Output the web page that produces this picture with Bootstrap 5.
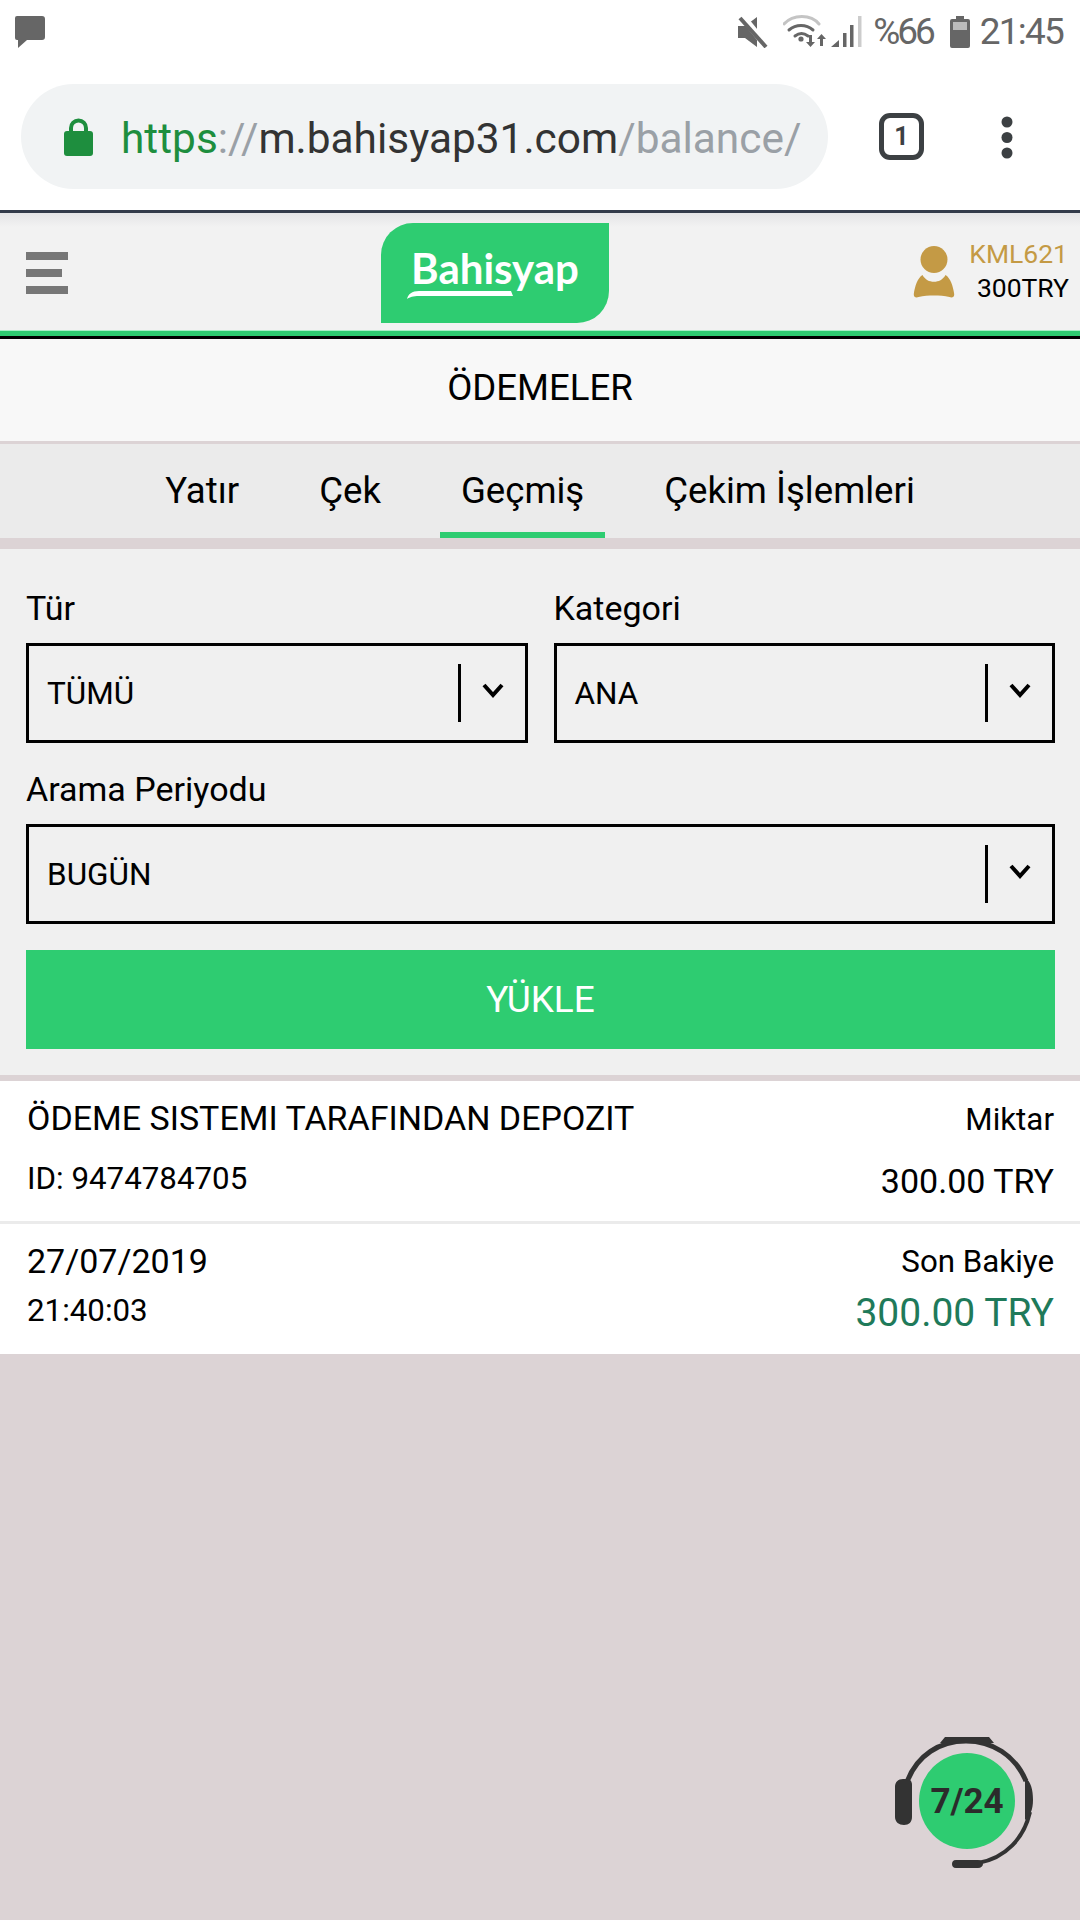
<!DOCTYPE html>
<html lang="tr">

<head>
  <meta charset="UTF-8" />
  <meta name="viewport" content="width=device-width, initial-scale=1.0" />
  <title>Bahisyap - Ödemeler</title>
  <link href="https://cdn.jsdelivr.net/npm/bootstrap@5.3.3/dist/css/bootstrap.min.css" rel="stylesheet" />
  <style>
    body {
      position: relative;
      min-height: 1920px;
      background: #dcd3d5;
      font-family: Roboto, sans-serif;
      color: #000;
      overflow: hidden;
    }

    /* phone + browser chrome */
    .phone-status {
      height: 84px;
      padding: 15px 17px 0 14px;
      background: #fff;
      color: #666;
    }

    .status-text {
      gap: 14px;
      font-size: 37px;
      line-height: 33px;
    }

    .status-icons { gap: 15px; margin-right: -3px; }
    .status-pct { letter-spacing: -3px; margin-right: 3px; }
    .status-batt { margin-right: -4px; }
    .status-time { letter-spacing: -1.8px; }

    .omni-row {
      height: 126px;
      background: #fff;
    }

    .omni-pill {
      width: 807px;
      height: 105px;
      margin-left: 21px;
      padding-left: 43px;
      background: #f1f3f4;
      border-radius: 53px;
      font-size: 42.4px;
      white-space: nowrap;
    }

    .lock-ico { margin-right: 28px; flex-shrink: 0; }
    .url-text { padding-top: 4px; }
    .url-https { color: #1e8e3e; }
    .url-sep { color: #9aa0a6; }
    .url-host { color: #333; }

    .tab-count {
      width: 45px;
      height: 47px;
      margin: 29px 0 0 51px;
      border: 5px solid #3c4043;
      border-radius: 11px;
      font-size: 25px;
      font-weight: 700;
      line-height: 1;
      color: #3c4043;
    }

    .omni-dots { margin: 32px 0 0 77px; }

    /* site header */
    .site-head {
      height: 129px;
      padding: 0 11px 0 26px;
      background: linear-gradient(#e4e4e6, #f2f2f2 14px);
      border-top: 3px solid #333b4a;
      border-bottom: 3px solid #000;
      box-shadow: inset 0 -5px 0 #2ecc71, inset 0 -6px 0 #a8f0c8;
      flex-wrap: nowrap;
      align-items: flex-start;
    }

    .burger { width: 42px; margin-top: 39px; }

    .burger i {
      display: block;
      height: 8px;
      margin-bottom: 9px;
      background: #777;
    }

    .burger i:nth-child(2) { width: 36px; }

    .logo-mark {
      width: 228px;
      height: 100px;
      margin: 10px 0 0 313px;
      padding-bottom: 10px;
      background: #2ecc71;
      border-radius: 32px 0 32px 0;
      color: #fff;
      font-family: Lato, sans-serif;
      font-size: 42px;
      font-weight: 700;
      line-height: 1;
    }

    .logo-swoosh { position: absolute; left: 26px; top: 67px; }

    .user-box { font-size: 26.5px; line-height: 34px; margin-top: 24px; }
    .user-ico { margin-top: 9px; }
    .user-info { margin-left: 14px; }
    .user-name { color: #c49a45; margin-right: 1px; }

    /* page */
    .page-title {
      height: 105px;
      padding-bottom: 4px;
      background: #f8f8f8;
      border-bottom: 3px solid #dcd3d5;
      font-size: 36.6px;
    }

    .pay-tabs {
      height: 105px;
      background: #ebebeb;
      border-bottom: 11px solid #dcd3d5;
      gap: 38px;
    }

    .pay-tabs .nav-link {
      height: 94px;
      padding: 0 21px;
      color: #000;
      font-size: 36.6px;
      line-height: 94px;
    }

    .pay-tabs .nav-link.active { border-bottom: 6px solid #2ecc71; }

    .filter-box {
      height: 532px;
      padding: 35px 25px 0 26px;
      background: #f0f0f0;
      border-bottom: 6px solid #dcd3d5;
    }

    .filter-row { --bs-gutter-x: 26px; }

    .filter-label {
      margin: 0 0 10px;
      font-size: 34px;
      line-height: 49px;
    }

    .pick-box {
      height: 100px;
      padding: 2px 0 0 18px;
      margin-bottom: 22px;
      border: 3px solid #000;
      font-size: 31.5px;
    }

    .pick-arrow {
      width: 67px;
      height: 58px;
      margin: -2px 0 0 auto;
      border-left: 3px solid #000;
    }

    .pick-arrow svg { margin-bottom: 4px; }

    .load-btn {
      display: block;
      width: 100%;
      height: 99px;
      margin-top: 26px;
      border: 0;
      border-radius: 0;
      background: #2ecc71;
      color: #fff;
      font-size: 37px;
    }

    .tx-row {
      padding: 17px 26px 0 27px;
      background: #fff;
      white-space: nowrap;
      line-height: 40px;
    }

    .tx-top { height: 143px; border-bottom: 3px solid #ebebeb; }
    .tx-bottom { height: 130px; }

    .tx-big { font-size: 34px; }
    .tx-mid { font-size: 31.3px; }
    .tx-saldo { font-size: 39px; color: #1f7a5a; }

    .gap-id { margin-top: 21px; }
    .gap-amount { margin-top: 21px; }
    .gap-time { margin-top: 10px; }
    .gap-saldo { margin-top: 11px; }
    .nudge-two { margin-top: 2px; }
    .nudge-one { margin-top: 1px; }

    /* support widget sits over the page */
    .help-widget { position: absolute; left: 890px; top: 1730px; }
  </style>
</head>

<body>
  <div class="phone-status d-flex justify-content-between align-items-start">
    <svg width="32" height="34" viewBox="0 0 32 34"><path fill="#666" d="M3 1h25a3 3 0 0 1 3 3v18a3 3 0 0 1-3 3H13l-9 8v-8H3a2 2 0 0 1-2-2V3a2 2 0 0 1 2-2z"/></svg>
    <div class="d-flex align-items-center status-text">
      <div class="d-flex align-items-center status-icons">
        <svg width="30" height="32" viewBox="0 0 30 32">
          <path fill="#666" d="M0 10h7L19 1v30L7 22H0z"/>
          <path fill="none" stroke="#fff" stroke-width="7" d="M4 0l26 32"/>
          <path fill="none" stroke="#666" stroke-width="4" d="M2 2l26 29"/>
        </svg>
        <svg width="79" height="33" viewBox="0 0 79 33">
          <g fill="none" stroke-linecap="round" stroke-width="3">
            <path stroke="#c4c4c4" d="M1 9C10-1 28-1 36 9"/>
            <path stroke="#666" d="M6 15c7-6 17-6 24 0"/>
            <path stroke="#666" d="M12 21c4-3 9-3 13 0"/>
          </g>
          <circle cx="18" cy="24" r="2.6" fill="#666"/>
          <path fill="#666" d="M26 20h3v7h3l-4.500 5-4.500-5h3zM40 31h-3v-7h-3l4.500-5 4.500 5h-3z"/>
          <path fill="#666" d="M48 32l8-7v7zM60 18h3.500v14H60zM67 10h3.500v22H67z"/>
          <path fill="#ccc" d="M75 1h3.500v31H75z"/>
        </svg>
      </div>
      <span class="status-pct">%66</span>
      <svg class="status-batt" width="20" height="32" viewBox="0 0 20 32"><path fill="#666" d="M6 0h8v3h4a2 2 0 0 1 2 2v25a2 2 0 0 1-2 2H2a2 2 0 0 1-2-2V5a2 2 0 0 1 2-2h4z"/><path fill="#bbb" d="M3 6h14v8H3z"/></svg>
      <span class="status-time">21:45</span>
    </div>
  </div>

  <div class="omni-row d-flex align-items-start">
    <div class="omni-pill d-flex align-items-center">
      <svg class="lock-ico" width="29" height="38" viewBox="0 0 29 38"><path fill="none" stroke="#1e8e3e" stroke-width="4" d="M7 16V10a7.500 7.500 0 0 1 15 0v6"/><rect y="13" width="29" height="25" rx="3" fill="#1e8e3e"/></svg>
      <span class="url-text"><span class="url-https">https</span><span class="url-sep">://</span><span class="url-host">m.bahisyap31.com</span><span class="url-sep">/balance/</span></span>
    </div>
    <div class="tab-count d-flex align-items-center justify-content-center flex-shrink-0">1</div>
    <svg class="omni-dots flex-shrink-0" width="12" height="44" viewBox="0 0 12 44"><g fill="#3c4043"><circle cx="6" cy="6" r="5.500"/><circle cx="6" cy="21.500" r="5.500"/><circle cx="6" cy="37" r="5.500"/></g></svg>
  </div>

  <nav class="navbar site-head position-relative">
    <div class="burger"><i></i><i></i><i></i></div>
    <div class="logo-mark position-relative d-flex align-items-center justify-content-center">
      <span>Bahisyap</span>
      <svg class="logo-swoosh" width="106" height="9" viewBox="0 0 106 9"><path fill="#fff" d="M0 9C1 4 5 1 12 1h92l2 5H12C6 6 3 7 0 9z"/></svg>
    </div>
    <div class="user-box ms-auto d-flex">
      <svg class="user-ico" width="42" height="52" viewBox="0 0 42 54"><circle cx="21" cy="14" r="14" fill="#c49a45"/><path fill="#c49a45" d="M9 30c3 5 7 7 12 7s9-2 12-7c5 3 8 12 9 20 0 3-2 4-5 3-10-2-22-2-32 0-3 1-5 0-5-3 1-8 4-17 9-20z"/></svg>
      <div class="text-end user-info">
        <div class="user-name">KML621</div>
        <div>300TRY</div>
      </div>
    </div>
  </nav>

  <div class="page-title d-flex align-items-center justify-content-center">ÖDEMELER</div>

  <ul class="nav pay-tabs justify-content-center">
    <li class="nav-item"><a class="nav-link" href="#">Yatır</a></li>
    <li class="nav-item"><a class="nav-link" href="#">Çek</a></li>
    <li class="nav-item"><a class="nav-link active" href="#">Geçmiş</a></li>
    <li class="nav-item"><a class="nav-link" href="#">Çekim İşlemleri</a></li>
  </ul>

  <form class="filter-box">
    <div class="row filter-row">
      <div class="col-6">
        <div class="filter-label">Tür</div>
        <div class="pick-box d-flex align-items-center">TÜMÜ
          <span class="pick-arrow d-flex align-items-center justify-content-center"><svg width="22" height="16" viewBox="0 0 22 16"><path fill="none" stroke="#000" stroke-width="4" d="M2 2l9 10 9-10"/></svg></span>
        </div>
      </div>
      <div class="col-6">
        <div class="filter-label">Kategori</div>
        <div class="pick-box d-flex align-items-center">ANA
          <span class="pick-arrow d-flex align-items-center justify-content-center"><svg width="22" height="16" viewBox="0 0 22 16"><path fill="none" stroke="#000" stroke-width="4" d="M2 2l9 10 9-10"/></svg></span>
        </div>
      </div>
    </div>
    <div class="filter-label">Arama Periyodu</div>
    <div class="pick-box d-flex align-items-center">BUGÜN
      <span class="pick-arrow d-flex align-items-center justify-content-center"><svg width="22" height="16" viewBox="0 0 22 16"><path fill="none" stroke="#000" stroke-width="4" d="M2 2l9 10 9-10"/></svg></span>
    </div>
    <button type="button" class="btn load-btn">YÜKLE</button>
  </form>

  <div class="tx-row tx-top d-flex justify-content-between">
    <div>
      <div class="tx-big">ÖDEME SISTEMI TARAFINDAN DEPOZIT</div>
      <div class="tx-mid gap-id">ID: 9474784705</div>
    </div>
    <div class="text-end">
      <div class="tx-mid nudge-two">Miktar</div>
      <div class="tx-big gap-amount">300.00 TRY</div>
    </div>
  </div>
  <div class="tx-row tx-bottom d-flex justify-content-between">
    <div>
      <div class="tx-big">27/07/2019</div>
      <div class="tx-mid gap-time">21:40:03</div>
    </div>
    <div class="text-end">
      <div class="tx-mid nudge-one">Son Bakiye</div>
      <div class="tx-saldo gap-saldo">300.00 TRY</div>
    </div>
  </div>

  <div class="help-widget">
    <svg width="150" height="145" viewBox="890 1730 150 145">
      <g fill="none" stroke="#333" stroke-width="5">
        <path d="M907 1782C917 1755 940 1741 966 1741s49 14 60 40"/>
        <path stroke-width="4" d="M1030 1812C1024 1838 1006 1858 978 1863"/>
      </g>
      <path fill="#333" d="M945 1737h44l5 6h-54zM1025 1778c6 3 8 12 8 22s-3 16-8 20zM903 1779h3c4 0 6 2 6 6v32c0 5-3 8-8 8s-9-3-9-8v-30c0-5 3-8 8-8zM956 1860h22c3 0 5 2 5 4s-2 4-5 4h-22c-3 0-4-2-4-4s1-4 4-4z"/>
      <circle cx="967" cy="1801" r="48" fill="#2ecc71"/>
      <text x="967" y="1813" text-anchor="middle" font-family="Roboto, sans-serif" font-size="35" font-weight="700" fill="#2b2b2b">7/24</text>
    </svg>
  </div>

  <script src="https://cdn.jsdelivr.net/npm/bootstrap@5.3.3/dist/js/bootstrap.bundle.min.js"></script>
</body>

</html>
